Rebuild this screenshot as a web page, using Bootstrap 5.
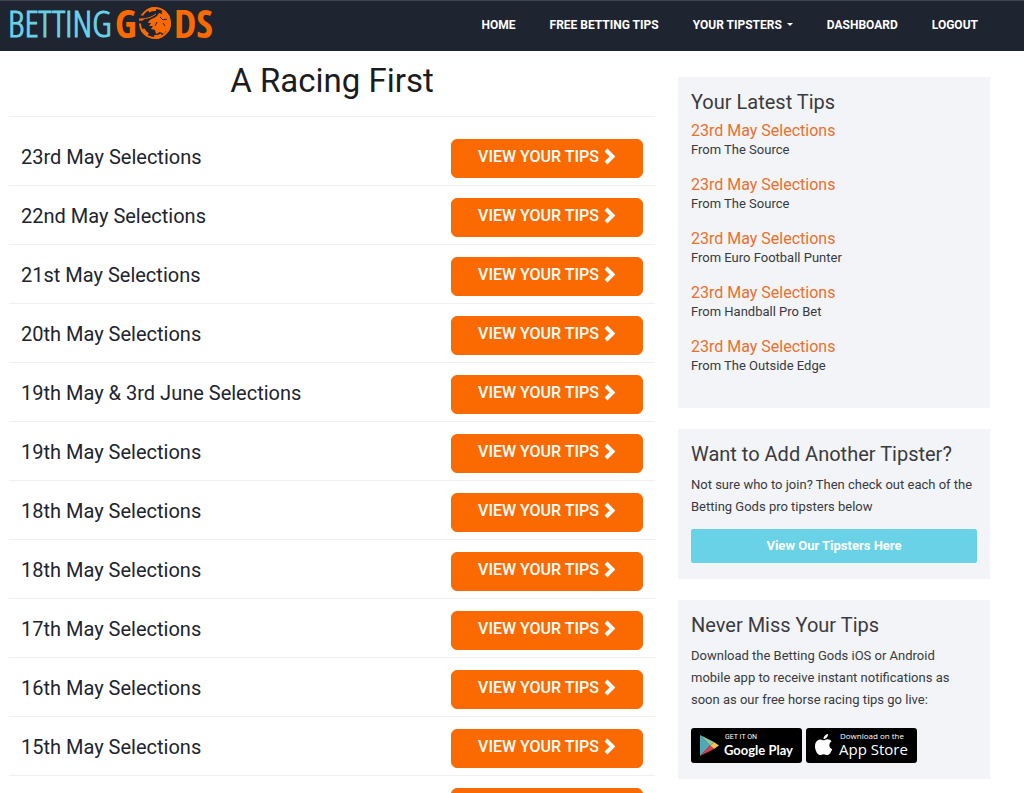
<!DOCTYPE html>
<html lang="en">
<head>
<meta charset="utf-8">
<meta name="viewport" content="width=device-width, initial-scale=1">
<title>A Racing First - Betting Gods</title>
<link href="https://cdn.jsdelivr.net/npm/bootstrap@5.3.0/dist/css/bootstrap.min.css" rel="stylesheet">
<style>
  body { font-family: Roboto, "Liberation Sans", sans-serif; color: #373a40; }
  .site-nav { background: #1f2431; border-top: 1px solid #3d4656; min-height: 51px; }
  .brand-logo { display: block; width: 210px; height: 50px; overflow: visible; }
  .logo-thin { font-family: "Open Sans Condensed Light", "Open Sans Condensed", "Liberation Sans Narrow", sans-serif; font-weight: 300; font-size: 37px; fill: #69d2e7; stroke: #69d2e7; stroke-width: 1px; }
  .logo-bold { font-family: "Open Sans Condensed", "Liberation Sans Narrow", sans-serif; font-weight: 700; font-size: 40px; fill: #fb6a00; }
  .site-nav .menu-list .nav-link { color: #fff; font-size: 12px; line-height: 20px; font-weight: 700; padding: 0 0 2px; }
  .site-nav .dropdown-toggle::after { border-top-width: 3px; border-left-width: 3px; border-right-width: 3px; margin-left: 5px; vertical-align: 3px; }
  .menu-list { gap: 34px; margin-right: 46px; }
  .page-wrap { padding-left: 9px; padding-right: 34px; }
  .page-title { font-size: 33px; line-height: 40px; font-weight: 400; color: #1b1c20; padding: 10px 0 15px; margin: 0; }
  .tip-list { border-top: 1px solid #f0f0f1; padding-top: 10px; }
  .tip-row { border-bottom: 1px solid #f0f0f1; padding: 12px 12px 7px 12px; }
  .tip-name { font-size: 20px; line-height: 24px; font-weight: 400; color: #20242e; margin: 0; }
  .btn-tips { --bs-btn-color: #fff; --bs-btn-bg: #fb6a00; --bs-btn-border-color: #fb6a00; --bs-btn-hover-color: #fff; --bs-btn-hover-bg: #e56100; --bs-btn-hover-border-color: #e56100; width: 192px; height: 39px; font-size: 16px; line-height: 24px; font-weight: 500; border-radius: 6px; padding: 4px 0 8px; }
  .side-col { padding: 26px 0 14px 15px; }
  .side-panel { background: #f3f4f7; padding: 12px 13px 16px; margin-bottom: 21px; }
  .side-title { font-size: 20px; line-height: 26px; font-weight: 400; color: #3a3b3f; margin: 0; }
  .latest { margin: 6px 0 17px; }
  .latest-item { margin-bottom: 16px; }
  .latest-item a { display: block; color: #ea6f2d; font-size: 16px; line-height: 20px; text-decoration: none; }
  .latest-item span { display: block; font-size: 13px; line-height: 18px; }
  .side-text { font-size: 13px; line-height: 22px; margin: 7px 0 11px; }
  .btn-tipsters { --bs-btn-color: #fff; --bs-btn-bg: #69d2e7; --bs-btn-border-color: #69d2e7; --bs-btn-hover-color: #fff; --bs-btn-hover-bg: #4fc5dc; --bs-btn-hover-border-color: #4fc5dc; font-size: 13px; line-height: 20px; font-weight: 700; border-radius: 2px; padding: 6px; }
  .store-row { padding-top: 6px; }
  .store-link { display: block; width: 111px; height: 35px; }
  .store-link svg { display: block; }
</style>
</head>
<body>
<nav class="site-nav navbar navbar-expand p-0" aria-label="Main">
  <a class="ms-2" href="#" aria-label="Betting Gods">
    <svg class="brand-logo" viewBox="0 0 210 50">
      <text class="logo-thin" x="0" y="36">BETTING</text>
      <text class="logo-bold" x="107" y="37">G</text>
      <text class="logo-bold" x="166" y="37">DS</text>
      <circle cx="147" cy="22" r="15" fill="none" stroke="#fb6a00" stroke-width="2"/>
      <circle cx="147" cy="22" r="14" fill="none" stroke="#fb6a00" stroke-width="4" stroke-dasharray="8 6.660"/>
      <path fill="#1f2431" d="M129 15c7-1 13 0 20-4l1 3c-5 3-13 4-21 4zM128 20c6 0 12-1 16-3l1 2c-5 3-11 4-17 3z"/>
      <path fill="#fb6a00" d="M151 12l3 1 2-3 2 3 4 2-1 4 2 2-2 3 1 4-4 2-2 3-4-2-4 2-1-4-4-1 2-3-4 0 2-3-3 0c1-3 3-4 6-5l3-2z"/>
      <path fill="none" stroke="#fb6a00" d="M131 18c6 0 12-1 17-5"/>
      <path fill="none" stroke="#1f2431" d="M152 16l3 3 4-1M155 22l2 3M149 21l-2 4"/>
    </svg>
  </a>
  <ul class="menu-list navbar-nav ms-auto">
    <li class="nav-item"><a class="nav-link" href="#">HOME</a></li>
    <li class="nav-item"><a class="nav-link" href="#">FREE BETTING TIPS</a></li>
    <li class="nav-item dropdown">
      <a class="nav-link dropdown-toggle" href="#" role="button" data-bs-toggle="dropdown" aria-expanded="false">YOUR TIPSTERS</a>
      <ul class="dropdown-menu"><li><a class="dropdown-item" href="#">The Source</a></li></ul>
    </li>
    <li class="nav-item"><a class="nav-link" href="#">DASHBOARD</a></li>
    <li class="nav-item"><a class="nav-link" href="#">LOGOUT</a></li>
  </ul>
</nav>

<div class="page-wrap container-fluid">
  <div class="row g-0">
    <main class="col-8 pe-2">
      <h1 class="page-title text-center">A Racing First</h1>
      <ul class="tip-list list-unstyled mb-0" id="tips"></ul>
    </main>

    <aside class="side-col col-4">
      <section class="side-panel">
        <h2 class="side-title">Your Latest Tips</h2>
        <div class="latest">
          <div class="latest-item"><a href="#">23rd May Selections</a><span>From The Source</span></div>
          <div class="latest-item"><a href="#">23rd May Selections</a><span>From The Source</span></div>
          <div class="latest-item"><a href="#">23rd May Selections</a><span>From Euro Football Punter</span></div>
          <div class="latest-item"><a href="#">23rd May Selections</a><span>From Handball Pro Bet</span></div>
          <div class="latest-item"><a href="#">23rd May Selections</a><span>From The Outside Edge</span></div>
        </div>
      </section>
      <section class="side-panel">
        <h2 class="side-title">Want to Add Another Tipster?</h2>
        <p class="side-text">Not sure who to join? Then check out each of the Betting Gods pro tipsters below</p>
        <button type="button" class="btn btn-tipsters w-100">View Our Tipsters Here</button>
      </section>
      <section class="side-panel">
        <h2 class="side-title">Never Miss Your Tips</h2>
        <p class="side-text">Download the Betting Gods iOS or Android mobile app to receive instant notifications as soon as our free horse racing tips go live:</p>
        <div class="store-row d-flex gap-1">
          <a class="store-link" href="#" aria-label="Get it on Google Play">
            <svg width="111" height="35" viewBox="0 0 111 35">
              <rect width="111" height="35" rx="3"/>
              <path fill="#4fa9b8" d="M9 7v21l10-10.500z"/>
              <path fill="#8fc6a0" d="M9 7l10 10.500 4-3.500z"/>
              <path fill="#f0c05a" d="M23 14l5 3.500-5 3.500-4-3.500z"/>
              <path fill="#d8404f" d="M9 28l10-10.500 4 3.500z"/>
              <text x="34" y="11" font-size="7" fill="#fff">GET IT ON</text>
              <text x="33" y="27" font-size="13" font-weight="700" fill="#fff" font-family="Lato, sans-serif">Google Play</text>
            </svg>
          </a>
          <a class="store-link" href="#" aria-label="Download on the App Store">
            <svg width="111" height="35" viewBox="0 0 111 35">
              <rect width="111" height="35" rx="3"/>
              <path fill="#fff" d="M22 6c.2 2.600-2 5-4.400 5C17.400 8.600 19.600 6.300 22 6zM17.700 12.300c1 0 2.300-1.200 4-1.100 1.600 0 3 .8 3.900 2-3.300 2-2.800 6.600.6 8-1 2.700-2.800 5.800-4.800 5.900-1.400 0-2-.9-3.700-.9s-2.300.9-3.700.9c-2.600 0-6.100-6.300-4.700-11.400.7-2.500 2.800-4.300 5-4.300 1.500 0 2.500.9 3.400.9z"/>
              <text x="34" y="11" font-size="8" fill="#fff" font-family="'Open Sans', sans-serif">Download on the</text>
              <text x="33" y="27" font-size="15" font-weight="500" fill="#fff" font-family="'Open Sans', sans-serif">App Store</text>
            </svg>
          </a>
        </div>
      </section>
    </aside>
  </div>
</div>

<script src="https://cdn.jsdelivr.net/npm/bootstrap@5.3.0/dist/js/bootstrap.bundle.min.js"></script>
<script>
  const days = ["23rd May", "22nd May", "21st May", "20th May", "19th May & 3rd June", "19th May",
                "18th May", "18th May", "17th May", "16th May", "15th May", "14th May"];
  const list = document.getElementById("tips");
  for (const day of days) {
    const row = document.createElement("li");
    row.className = "tip-row d-flex align-items-center justify-content-between";
    row.innerHTML = `<h2 class="tip-name pb-1"></h2>
      <button type="button" class="btn btn-tips d-flex align-items-center justify-content-center gap-1">VIEW YOUR TIPS
        <svg width="13" height="17" viewBox="0 0 13 17" fill="none" stroke="#fff" stroke-width="4" aria-hidden="true"><path d="M3 2l6.500 6.500L3 15"/></svg>
      </button>`;
    row.querySelector("h2").textContent = day + " Selections";
    list.append(row);
  }
</script>
</body>
</html>
